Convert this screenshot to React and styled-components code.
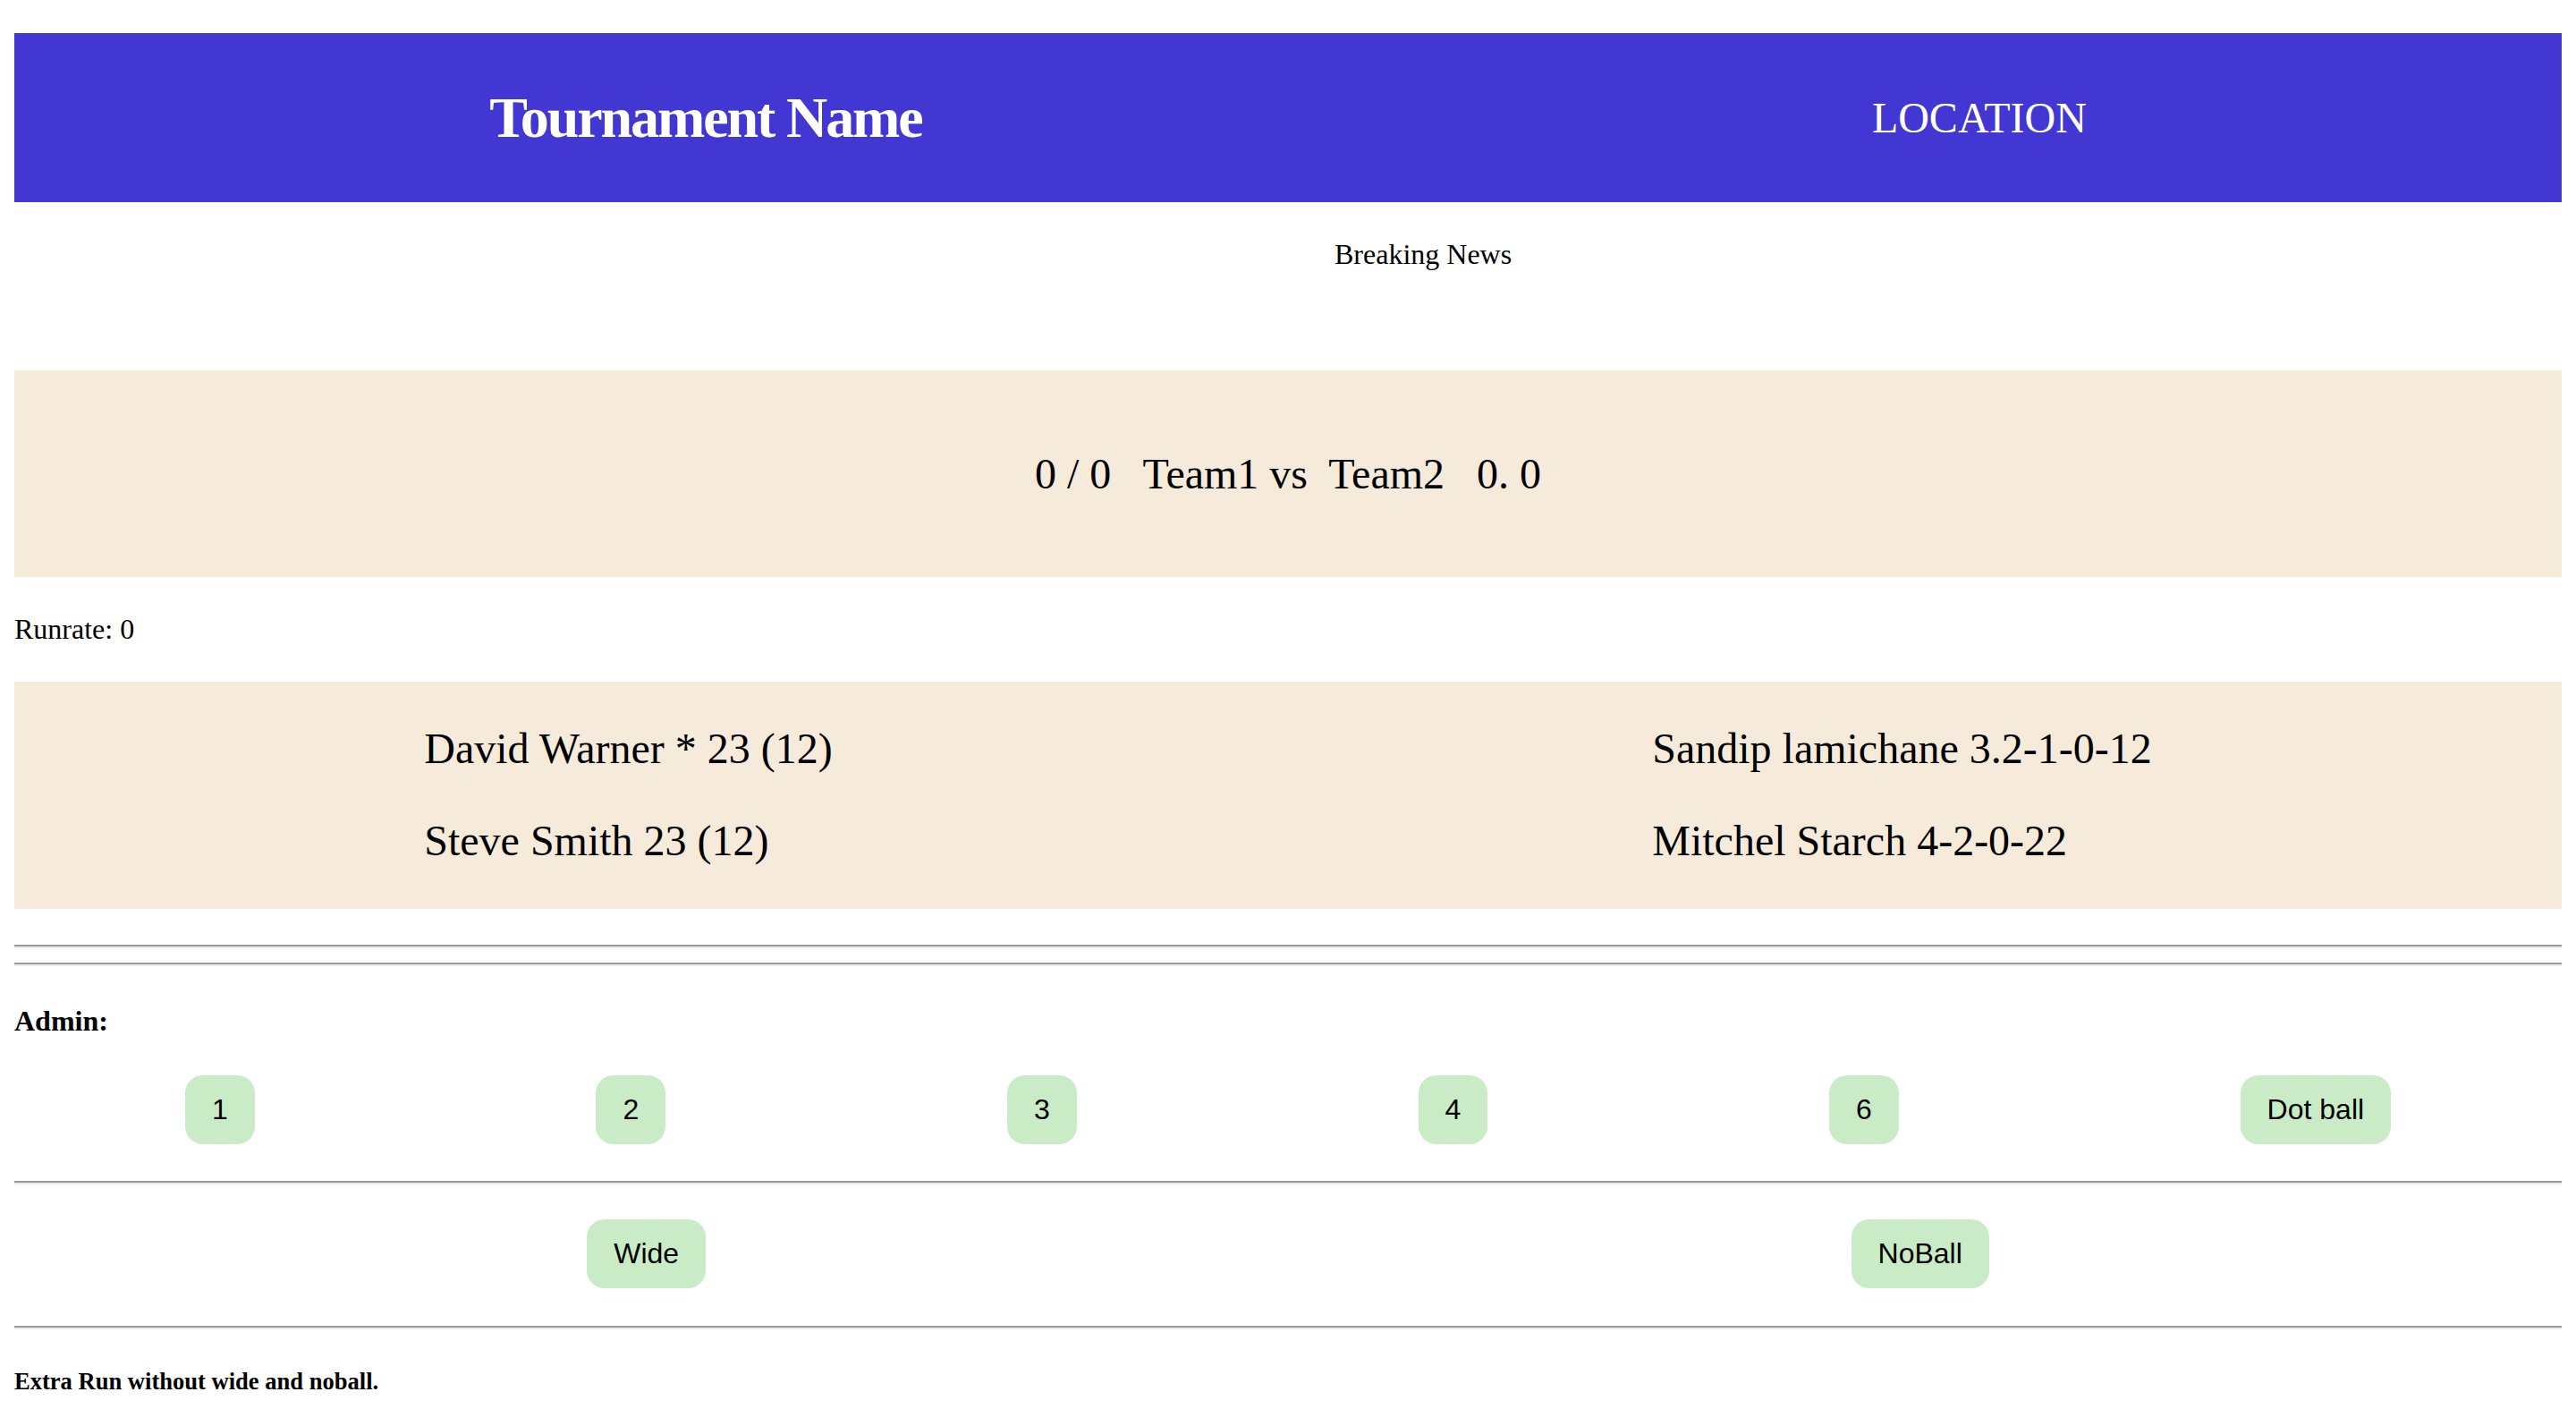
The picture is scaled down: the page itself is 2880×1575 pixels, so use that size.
import React from "react";
import styled, { createGlobalStyle } from "styled-components";

const Global = createGlobalStyle`
  html, body { margin: 0; padding: 0; background: #ffffff; }
  body { font-family: "Liberation Serif", "Times New Roman", serif; color: #000; }
`;

const Page = styled.div`
  padding: 37px 16px 0;
`;

const Header = styled.header`
  height: 189px;
  background: #4237d3;
  display: flex;
  justify-content: space-around;
  align-items: center;
  color: #ffffff;
`;

const Title = styled.h1`
  margin: 0;
  font-size: 64px;
  font-weight: bold;
  letter-spacing: -2.1px;
`;

const Location = styled.h2`
  margin: 0;
  font-size: 48px;
  font-weight: normal;
`;

const News = styled.div`
  margin-top: 40px;
  padding-left: 1476px;
  font-size: 32px;
  white-space: nowrap;
`;

const Band = styled.section`
  background: #f6ebdb;
  display: flex;
  justify-content: space-around;
  align-items: center;
  margin-top: ${(p) => p.$top}px;
  min-height: ${(p) => p.$height}px;
`;

const Score = styled.div`
  font-size: 48px;
  white-space: pre;
`;

const Runrate = styled.div`
  margin-top: 40px;
  font-size: 32px;
`;

const Column = styled.div`
  display: flex;
  flex-direction: column;
  gap: 48px;
  padding: 46px 0 49px;
`;

const Line = styled.p`
  margin: 0;
  font-size: 48px;
  white-space: nowrap;
`;

const Rule = styled.hr`
  height: 0;
  margin: ${(p) => p.$top}px 0 0;
  border: none;
  border-top: 2px solid #9a9a9a;
  border-bottom: 2px solid #ececec;
`;

const Label = styled.div`
  margin-top: ${(p) => p.$top}px;
  font-size: ${(p) => p.$size}px;
  font-weight: bold;
`;

const ButtonRow = styled.div`
  display: flex;
  justify-content: space-around;
  align-items: center;
  margin-top: ${(p) => p.$top}px;
`;

const RunButton = styled.button`
  font-family: "Liberation Sans", Arial, sans-serif;
  font-size: 32px;
  line-height: normal;
  color: #000;
  background: #c9ebc6;
  border: none;
  border-radius: 20px;
  padding: 20px 30px;
  cursor: pointer;
`;

export default function App() {
  return (
    <>
      <Global />
      <Page>
        <Header>
          <Title>Tournament Name</Title>
          <Location>LOCATION</Location>
        </Header>
        <News>Breaking News</News>
        <Band $top={111} $height={231}>
          <Score>{"0 / 0   Team1 vs  Team2   0. 0"}</Score>
        </Band>
        <Runrate>Runrate: 0</Runrate>
        <Band $top={40} $height={254}>
          <Column>
            <Line>David Warner * 23 (12)</Line>
            <Line>Steve Smith 23 (12)</Line>
          </Column>
          <Column>
            <Line>Sandip lamichane 3.2-1-0-12</Line>
            <Line>Mitchel Starch 4-2-0-22</Line>
          </Column>
        </Band>
        <Rule $top={40} />
        <Rule $top={16} />
        <Label $top={43} $size={32}>Admin:</Label>
        <ButtonRow $top={42}>
          {["1", "2", "3", "4", "6", "Dot ball"].map((b) => (
            <RunButton key={b}>{b}</RunButton>
          ))}
        </ButtonRow>
        <Rule $top={41} />
        <ButtonRow $top={39}>
          <RunButton>Wide</RunButton>
          <RunButton>NoBall</RunButton>
        </ButtonRow>
        <Rule $top={42} />
        <Label $top={43} $size={26.56}>Extra Run without wide and noball.</Label>
      </Page>
    </>
  );
}
